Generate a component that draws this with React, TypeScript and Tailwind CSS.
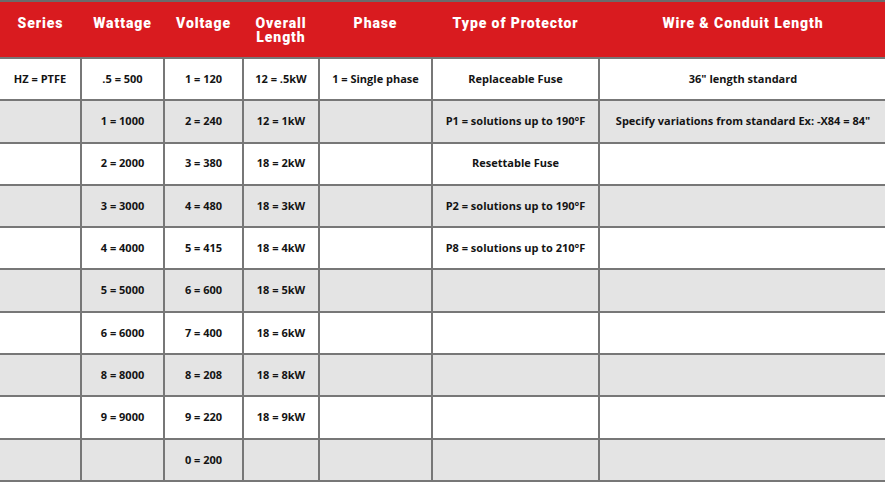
import React from "react";

const cols = [81, 83, 79, 76, 113, 167, 288];

const headers = ["Series", "Wattage", "Voltage", "Overall Length", "Phase", "Type of Protector", "Wire & Conduit Length"];

const rows: string[][] = [
  ["HZ = PTFE", ".5 = 500", "1 = 120", "12 = .5kW", "1 = Single phase", "Replaceable Fuse", "36\" length standard"],
  ["", "1 = 1000", "2 = 240", "12 = 1kW", "", "P1 = solutions up to 190°F", "Specify variations from standard Ex: -X84 = 84\""],
  ["", "2 = 2000", "3 = 380", "18 = 2kW", "", "Resettable Fuse", ""],
  ["", "3 = 3000", "4 = 480", "18 = 3kW", "", "P2 = solutions up to 190°F", ""],
  ["", "4 = 4000", "5 = 415", "18 = 4kW", "", "P8 = solutions up to 210°F", ""],
  ["", "5 = 5000", "6 = 600", "18 = 5kW", "", "", ""],
  ["", "6 = 6000", "7 = 400", "18 = 6kW", "", "", ""],
  ["", "8 = 8000", "8 = 208", "18 = 8kW", "", "", ""],
  ["", "9 = 9000", "9 = 220", "18 = 9kW", "", "", ""],
  ["", "", "0 = 200", "", "", "", ""],
];

export default function App() {
  return (
    <div className="h-[482px] w-[885px] overflow-hidden bg-white">
      <table className="w-[887px] table-fixed border-collapse border-t-2 border-t-[#6b6b6b]">
        <colgroup>
          {cols.map((w, i) => (
            <col key={i} style={{ width: w }} />
          ))}
        </colgroup>
        <thead>
          <tr className="h-[57px] bg-[#d91b1f]">
            {headers.map((h) => (
              <th
                key={h}
                className="px-1 pt-[14px] align-top text-center font-['Roboto',sans-serif] text-[14px] font-black leading-[14px] tracking-[0.9px] text-white"
              >
                {h === "Overall Length" ? (
                  <>
                    <span className="block">Overall</span>
                    <span className="block">Length</span>
                  </>
                ) : (
                  h
                )}
              </th>
            ))}
          </tr>
        </thead>
        <tbody>
          {rows.map((r, i) => (
            <tr key={i} className={`h-[42.3px] ${i % 2 === 0 ? "bg-white" : "bg-[#e4e4e4]"}`}>
              {r.map((c, j) => (
                <td
                  key={j}
                  className={`border-2 border-[#777777] px-1 text-center font-['Open_Sans',sans-serif] text-[11px] font-bold text-[#141414] ${j === 0 ? "border-l-0" : ""}`}
                >
                  {c}
                </td>
              ))}
            </tr>
          ))}
        </tbody>
      </table>
    </div>
  );
}
